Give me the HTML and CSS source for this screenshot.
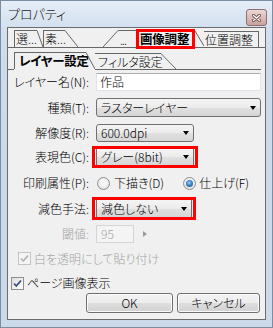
FILE: index.html
```html
<!DOCTYPE html>
<html lang="ja">
  <head>
    <meta charset="UTF-8" />
    <title>プロパティ</title>
    <link rel="stylesheet" href="styles.css">
  </head>
  <body>
    <div class="window">
      <div class="titlebar">
        <span class="title">プロパティ</span>
        <div class="close-btn">
          <svg width="9" height="8" viewBox="0 0 9 8">
            <path d="M1.5 1.5 L7.5 6.5 M7.5 1.5 L1.5 6.5" stroke="#6b4a48" stroke-width="3" stroke-linecap="round" />
            <path d="M1.5 1.5 L7.5 6.5 M7.5 1.5 L1.5 6.5" stroke="#fff" stroke-width="1.4" stroke-linecap="round" />
          </svg>
        </div>
      </div>

      <div class="client">
        <!-- top tab row -->
        <div class="tabs tabs-top">
          <div class="tab-edge"></div>
          <div class="tab">
            <span class="tab-label tab-a">選...</span>
            <svg class="diag" width="6" height="17"><path d="M0 0.5 L6 17" /></svg>
          </div>
          <div class="tab">
            <span class="tab-label tab-b">素...</span>
            <svg class="diag" width="13" height="17"><path d="M0 0.5 L13 17" /></svg>
          </div>
          <div class="tab-gap"></div>
          <div class="tab">
            <svg class="diag" width="15" height="17"><path d="M0 17 L15 0.5" /></svg>
            <span class="tab-label tab-c">...</span>
          </div>
          <div class="tab tab-current">
            <span class="tab-sel-box">画像調整</span>
          </div>
          <div class="tab">
            <svg class="diag" width="9" height="16"><path d="M0 0 L9 15" /></svg>
            <span class="tab-label tab-e">位置調整</span>
          </div>
          <div class="tab-fill"></div>
        </div>

        <!-- second tab row -->
        <div class="tabs tabs-sub">
          <div class="tab-edge"></div>
          <div class="tab tab-active">
            <span class="tab-label tab-layer">レイヤー設定</span>
            <svg class="diag" width="9" height="17"><path d="M0 0.5 L9 17" /></svg>
          </div>
          <div class="tab">
            <span class="tab-label tab-filter">フィルタ設定</span>
            <svg class="diag" width="15" height="16"><path d="M0 0.5 L15 16" /></svg>
          </div>
          <div class="tab-fill"></div>
        </div>

        <div class="form">
          <div class="row r1">
            <span class="lbl">レイヤー名(N):</span>
            <div class="textbox">作品</div>
          </div>
          <div class="row r2">
            <span class="lbl">種類(T):</span>
            <div class="combo w-full">ラスターレイヤー<span class="arrow"></span></div>
          </div>
          <div class="row r3">
            <span class="lbl">解像度(R):</span>
            <div class="combo w-mid">600.0dpi<span class="arrow"></span></div>
          </div>
          <div class="row r4">
            <span class="lbl">表現色(C):</span>
            <div class="redbox">
              <div class="combo boxed w-mid">グレー(8bit)<span class="arrow"></span></div>
            </div>
          </div>
          <div class="row r5">
            <span class="lbl">印刷属性(P):</span>
            <div class="radios">
              <span class="radio"></span>
              <span class="radio-text">下描き(D)</span>
              <span class="radio checked"><span class="dot"></span></span>
              <span class="radio-text">仕上げ(F)</span>
            </div>
          </div>
          <div class="row r6">
            <span class="lbl">減色手法:</span>
            <div class="redbox redbox-b">
              <div class="combo boxed w-small">減色しない<span class="arrow"></span></div>
            </div>
          </div>
          <div class="row r7 disabled">
            <span class="lbl">閾値:</span>
            <div class="threshold">
              <div class="textbox num">95</div>
              <span class="spin-arrow"></span>
            </div>
          </div>
        </div>

        <div class="check-row check-a disabled">
          <span class="checkbox">
            <svg width="11" height="11" viewBox="0 0 11 11"><path d="M2 5.5 L4.3 8 L9 2.5" /></svg>
          </span>
          <span>白を透明にして貼り付け</span>
        </div>
        <div class="check-row check-b">
          <span class="checkbox">
            <svg width="11" height="11" viewBox="0 0 11 11"><path d="M2 5.5 L4.3 8 L9 2.5" /></svg>
          </span>
          <span>ページ画像表示</span>
        </div>

        <div class="buttons">
          <div class="btn btn-ok">OK</div>
          <div class="btn btn-cancel">キャンセル</div>
        </div>
      </div>
    </div>
  </body>
</html>
```

FILE: styles.css
```css
* {
  margin: 0;
  padding: 0;
  box-sizing: border-box;
}

body {
  width: 273px;
  height: 328px;
  font-family: "Noto Sans CJK JP", "Noto Sans", sans-serif;
  font-size: 12px;
  font-weight: 300;
  line-height: 14px;
  color: #000;
  font-feature-settings: "palt";
  background: #fff;
}

.window {
  width: 273px;
  height: 328px;
  border: 1px solid #7b8da3;
  padding: 0 6px 7px;
  background: linear-gradient(180deg, #e6eef8 0px, #d3e0ef 26px, #cddaeb 60px, #cbd9ea 100%);
  display: flex;
  flex-direction: column;
}

/* title bar */
.titlebar {
  height: 26px;
  display: flex;
  align-items: center;
}

.titlebar .title {
  margin-left: 1px;
  font-size: 13px;
  color: #1a1a1a;
}

.close-btn {
  margin-left: auto;
  margin-right: -1px;
  align-self: flex-end;
  margin-bottom: 1px;
  width: 21px;
  height: 17px;
  border: 1px solid #8d706f;
  border-radius: 3px;
  background: linear-gradient(180deg, #ecd8d7 0%, #dcbcba 50%, #c9a09d 100%);
  display: flex;
  align-items: center;
  justify-content: center;
}

/* client area */
.client {
  height: 293px;
  border: 1px solid #6c6c6c;
  background: #f0f0f0;
  display: flex;
  flex-direction: column;
}

/* tabs */
.tabs {
  display: flex;
  align-items: stretch;
}

.tabs > div {
  border-bottom: 1px solid #666;
}

.tabs-top {
  height: 20px;
}

.tabs-sub {
  height: 22px;
  margin-right: 4px;
}

.tab-edge {
  width: 6px;
}

.tab-gap {
  width: 25px;
}

.tab-fill {
  flex: 1;
}

.tab {
  display: flex;
  align-items: flex-end;
}

.tab-label {
  display: flex;
  align-items: center;
  height: 17px;
  border-top: 1px solid #666;
  white-space: nowrap;
}

.diag {
  display: block;
  flex-shrink: 0;
}

.diag path {
  stroke: #666;
  stroke-width: 1;
  fill: none;
}

.tab-a {
  width: 23px;
  border-left: 1px solid #666;
  padding-left: 1px;
}

.tab-b {
  width: 22px;
  border-left: 1px solid #666;
  padding-left: 1px;
}

.tab-c {
  width: 18px;
  padding-left: 2px;
  align-items: flex-end;
  letter-spacing: -1px;
}

.tab-current {
  width: 59px;
  padding: 0 3px;
  border-bottom-color: transparent;
  align-items: flex-start;
}

.tab-sel-box {
  margin-top: 4px;
  width: 53px;
  height: 14px;
  outline: 3px solid #f00;
  font-weight: bold;
  font-size: 12.5px;
  display: flex;
  align-items: center;
  padding-left: 1px;
  letter-spacing: -0.2px;
}

.tab-e {
  width: 55px;
  height: 16px;
  border-right: 1px solid #666;
  padding-left: 1px;
}

.tab-active {
  border-bottom-color: transparent !important;
}

.tab-layer {
  width: 72px;
  border-left: 1px solid #666;
  padding-left: 4px;
  font-weight: bold;
  font-size: 12.5px;
  letter-spacing: -0.3px;
}

.tab-filter {
  width: 66px;
  height: 16px;
  padding-left: 3px;
}

/* form */
.form {
  display: flex;
  flex-direction: column;
}

.row {
  display: grid;
  grid-template-columns: 81px 1fr;
  column-gap: 7px;
  align-items: center;
}

.r1 { height: 24px; }
.r2 { height: 27px; }
.r3 { height: 23px; }
.r4 { height: 26px; }
.r5 { height: 26px; }
.r6 { height: 25px; }
.r7 { height: 25px; }

.lbl {
  text-align: right;
  white-space: nowrap;
}

.disabled {
  color: #a3a3a3;
}

.textbox {
  height: 18px;
  width: 165px;
  background: #fff;
  border: 1px solid #e2e3ea;
  border-top-color: #abadb3;
  padding-left: 3px;
  display: flex;
  align-items: center;
}

.combo {
  display: flex;
  align-items: center;
  height: 19px;
  border: 1px solid #707070;
  border-radius: 3px;
  background: linear-gradient(180deg, #f4f4f4 0%, #ececec 50%, #e0e0e0 51%, #d6d6d6 100%);
  padding: 0 4px 0 4px;
  white-space: nowrap;
}

.w-full { width: 165px; }
.w-mid { width: 98px; height: 18px; }
.w-small { width: 96px; }

.arrow {
  margin-left: auto;
  width: 0;
  height: 0;
  border-left: 3.5px solid transparent;
  border-right: 3.5px solid transparent;
  border-top: 4px solid #000;
}

.redbox {
  margin-left: -4px;
  width: 106px;
  height: 22px;
  border: 3px solid #f00;
  padding: 0 1px;
}

.redbox-b {
  width: 104px;
  height: 23px;
}

.combo.boxed {
  height: 100%;
  border-top-width: 0;
  border-bottom-width: 0;
  border-radius: 0;
}

.radios {
  display: flex;
  align-items: center;
}

.radio {
  width: 13px;
  height: 13px;
  border-radius: 50%;
  border: 1px solid #8e8f8f;
  background: radial-gradient(circle at 50% 40%, #ffffff 0%, #f0f0f0 45%, #d4d4d4 100%);
  display: flex;
  align-items: center;
  justify-content: center;
  margin-left: 1px;
}

.radio .dot {
  width: 7px;
  height: 7px;
  border-radius: 50%;
  background: radial-gradient(circle at 45% 40%, #9fd1f5 0%, #3a86c8 45%, #15457a 100%);
}

.radio-text {
  margin-left: 4px;
}

.radio.checked {
  margin-left: 19px;
}

.radio.checked + .radio-text {
  margin-left: 3px;
}

.threshold {
  display: flex;
  align-items: center;
}

.textbox.num {
  width: 38px;
  background: #f4f4f4;
  border-color: #d5d5d5;
  padding-left: 4px;
}

.spin-arrow {
  margin-left: 9px;
  width: 0;
  height: 0;
  border-top: 3.5px solid transparent;
  border-bottom: 3.5px solid transparent;
  border-left: 4px solid #9a9a9a;
}

/* checkboxes */
.check-row {
  display: flex;
  align-items: center;
  gap: 3px;
}

.check-a {
  height: 25px;
  padding-left: 10px;
}

.check-b {
  height: 22px;
  padding-left: 3px;
  padding-bottom: 3px;
  align-items: flex-end;
}

.checkbox {
  width: 13px;
  height: 13px;
  border: 1px solid #8e8f8f;
  background: linear-gradient(135deg, #dcdcdc 0%, #f6f6f6 70%, #ffffff 100%);
  display: flex;
  align-items: center;
  justify-content: center;
}

.checkbox path {
  stroke: #3b4d82;
  stroke-width: 1.8;
  fill: none;
}

.check-a .checkbox {
  border-color: #c4c4c4;
  background: #f4f4f4;
}

.check-a .checkbox path {
  stroke: #b4b4b4;
}

/* buttons */
.buttons {
  height: 20px;
  display: flex;
  justify-content: flex-end;
  gap: 4px;
  padding-right: 5px;
}

.btn {
  height: 20px;
  border: 1px solid #707070;
  border-radius: 3px;
  background: linear-gradient(180deg, #f4f4f4 0%, #ececec 50%, #dedede 51%, #d2d2d2 100%);
  box-shadow: inset 0 0 0 1px #fbfbfb;
  display: flex;
  align-items: center;
  justify-content: center;
}

.btn-ok {
  width: 87px;
}

.btn-cancel {
  width: 83px;
}
```
